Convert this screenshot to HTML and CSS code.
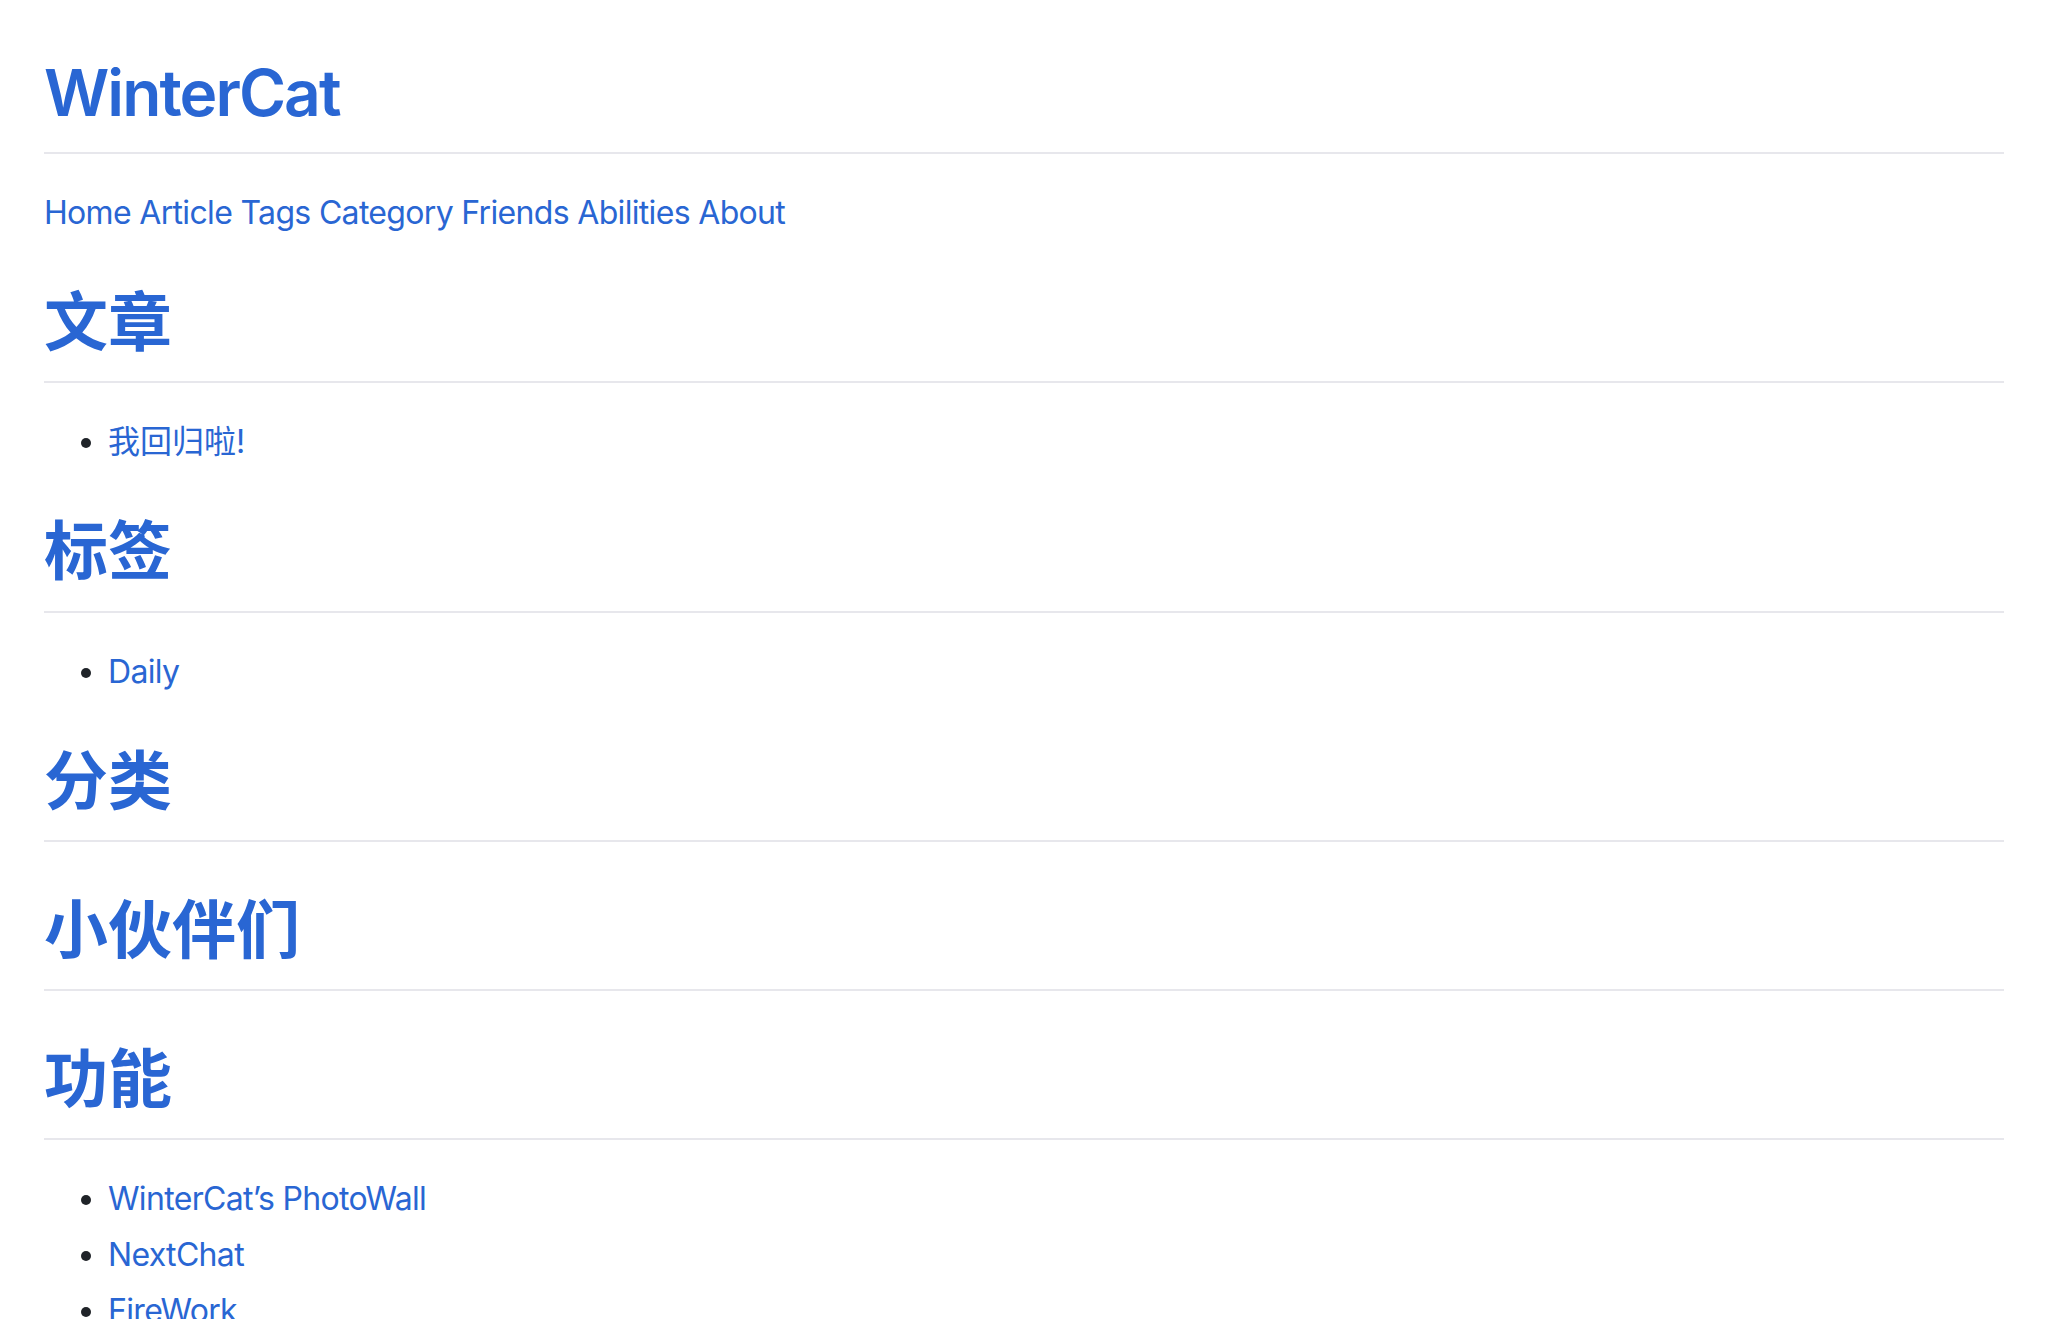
FILE: index.html
```html
<!DOCTYPE html>
<html lang="zh-CN">
<head>
<meta charset="utf-8">
<title>WinterCat</title>
<link rel="stylesheet" href="styles.css">
</head>
<body>
<main class="markdown-body">
  <h1 class="heading"><a href="#">WinterCat</a></h1>
  <p class="nav"><a href="#">Home</a> <a href="#">Article</a> <a href="#">Tags</a> <a href="#">Category</a> <a href="#">Friends</a> <a href="#">Abilities</a> <a href="#">About</a></p>

  <h2 class="heading cjk"><a href="#">文章</a></h2>
  <ul class="list">
    <li class="cjk"><a href="#">我回归啦!</a></li>
  </ul>

  <h2 class="heading cjk"><a href="#">标签</a></h2>
  <ul class="list">
    <li><a href="#">Daily</a></li>
  </ul>

  <h2 class="heading cjk"><a href="#">分类</a></h2>

  <h2 class="heading cjk"><a href="#">小伙伴们</a></h2>

  <h2 class="heading cjk"><a href="#">功能</a></h2>
  <ul class="list">
    <li><a href="#">WinterCat’s PhotoWall</a></li>
    <li><a href="#">NextChat</a></li>
    <li><a href="#">FireWork</a></li>
  </ul>
</main>
</body>
</html>
```

FILE: styles.css
```css
html, body {
  margin: 0;
  padding: 0;
  background: #ffffff;
}

.markdown-body {
  padding: 53px 44px 60px 44px;
  font-family: Inter, "Noto Sans CJK SC", sans-serif;
  font-size: 32px;
  line-height: 1.5;
  letter-spacing: -0.021em;
  color: #1f2328;
}

.markdown-body a {
  color: #2966d3;
  text-decoration: none;
}

.heading {
  margin: 48px 0 32px 0;
  padding-bottom: 0.3em;
  font-size: 64px;
  font-weight: 600;
  line-height: 1.25;
  letter-spacing: -0.03em;
  border-bottom: 2px solid #e7e7ec;
}

.markdown-body > .heading:first-child {
  margin-top: 0;
}

.markdown-body .cjk {
  letter-spacing: 0;
}

.nav {
  box-sizing: border-box;
  height: 48px;
  margin: 0 0 32px 0;
  padding-top: 3px;
}

.list {
  margin: 0 0 32px 0;
  padding-left: 64px;
}

.list li {
  box-sizing: border-box;
  height: 48px;
  padding-top: 3px;
}

.list li + li {
  margin-top: 8px;
}
```
